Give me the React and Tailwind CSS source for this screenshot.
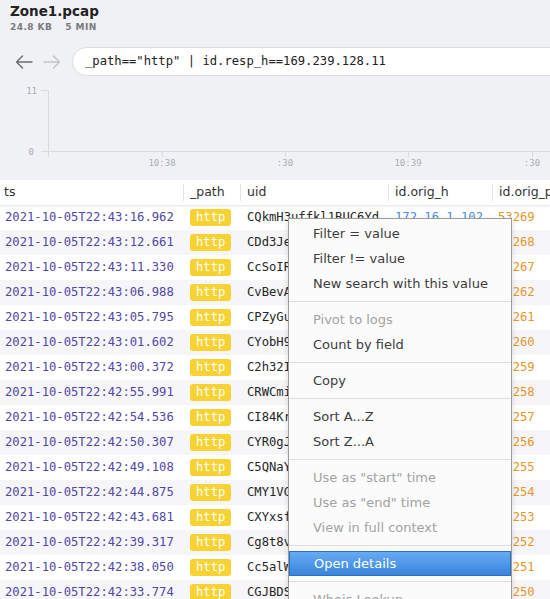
import { useState } from 'react'

const rows = [
  ['2021-10-05T22:43:16.962', 'CQkmH3uffkl1BUC6Yd', '172.16.1.102', '53269'],
  ['2021-10-05T22:43:12.661', 'CDd3Je4kR9mTq2Lx7', '172.16.1.102', '53268'],
  ['2021-10-05T22:43:11.330', 'CcSoIR2bWq8nYv1Hd', '172.16.1.102', '53267'],
  ['2021-10-05T22:43:06.988', 'CvBevA3sKp0dXr6Mz', '172.16.1.102', '53262'],
  ['2021-10-05T22:43:05.795', 'CPZyGu9LhW4eTb2Qn', '172.16.1.102', '53261'],
  ['2021-10-05T22:43:01.602', 'CYobH91mFz7cVs3Ka', '172.16.1.102', '53260'],
  ['2021-10-05T22:43:00.372', 'C2h32I8qNw5jRx0Ep', '172.16.1.102', '53259'],
  ['2021-10-05T22:42:55.991', 'CRWCmi6tGy2kLd9Uo', '172.16.1.102', '53258'],
  ['2021-10-05T22:42:54.536', 'CI84Kr0vBn3pHs7Wc', '172.16.1.102', '53257'],
  ['2021-10-05T22:42:50.307', 'CYR0gJ5xMa1fQe8Tz', '172.16.1.102', '53256'],
  ['2021-10-05T22:42:49.108', 'C5QNaY7dPk4sZu2Jb', '172.16.1.102', '53255'],
  ['2021-10-05T22:42:44.875', 'CMY1VG3rEw9hXc6Lm', '172.16.1.102', '53254'],
  ['2021-10-05T22:42:43.681', 'CXYxsf8nTq1gVa5Rd', '172.16.1.102', '53253'],
  ['2021-10-05T22:42:39.317', 'Cg8t8v2yKb6mWs0Fh', '172.16.1.102', '53252'],
  ['2021-10-05T22:42:38.050', 'Cc5alW4uJd9pNe3Yx', '172.16.1.102', '53251'],
  ['2021-10-05T22:42:33.774', 'CGJBDS1oHf7kRt2Cq', '172.16.1.102', '53250'],
]

const menu = [
  { label: 'Filter = value' },
  { label: 'Filter != value' },
  { label: 'New search with this value' },
  { sep: true },
  { label: 'Pivot to logs', disabled: true },
  { label: 'Count by field' },
  { sep: true },
  { label: 'Copy' },
  { sep: true },
  { label: 'Sort A...Z' },
  { label: 'Sort Z...A' },
  { sep: true },
  { label: 'Use as "start" time', disabled: true },
  { label: 'Use as "end" time', disabled: true },
  { label: 'View in full context', disabled: true },
  { sep: true },
  { label: 'Open details', active: true },
  { sep: true },
  { label: 'Whois Lookup', disabled: true },
]

const columns = [
  { name: 'ts', width: 'w-[183px]' },
  { name: '_path', width: 'w-[57px]' },
  { name: 'uid', width: 'w-[148px]' },
  { name: 'id.orig_h', width: 'w-[104px]' },
  { name: 'id.orig_p', width: 'w-[100px]' },
]

const Chart = () => (
  <svg width="550" height="104" className="block">
    <g stroke="#d9dadf" strokeWidth="1" fill="none">
      <line x1="48.5" y1="14" x2="48.5" y2="81" />
      <line x1="41" y1="14.5" x2="48" y2="14.5" />
      <line x1="41" y1="75.5" x2="550" y2="75.5" />
      <line x1="162.5" y1="75" x2="162.5" y2="81" />
      <line x1="285.5" y1="75" x2="285.5" y2="81" />
      <line x1="408.5" y1="75" x2="408.5" y2="81" />
      <line x1="532.5" y1="75" x2="532.5" y2="81" />
    </g>
    <g fill="#adadb3" fontFamily="'DejaVu Sans Mono', monospace" fontSize="9">
      <text x="37" y="17.5" textAnchor="end">11</text>
      <text x="34" y="78.5" textAnchor="end">0</text>
      <text x="162" y="90" textAnchor="middle">10:38</text>
      <text x="285" y="90" textAnchor="middle">:30</text>
      <text x="408" y="90" textAnchor="middle">10:39</text>
      <text x="532" y="90" textAnchor="middle">:30</text>
    </g>
  </svg>
)

const ContextMenu = () => (
  <div className="absolute left-[288px] top-[218px] w-[224px] h-[400px] bg-[#fbfbfb] border border-[#9c9c9c] pt-[2px] shadow-[0_2px_6px_rgba(0,0,0,0.15)] font-['DejaVu_Sans',sans-serif] text-[13px]">
    {menu.map((item, index) => {
      if (item.sep) {
        return <div key={index} className="h-[11px] flex items-center"><div className="w-full h-px bg-[#dedede]" /></div>
      }
      return (
        <div
          key={index}
          className={`h-[25px] flex items-center pl-[24px] ${
            item.active
              ? 'bg-gradient-to-b from-[#65aaf3] to-[#3a85dc] border border-[#2e6fc3] text-white'
              : item.disabled
                ? 'text-[#a2a2a2]'
                : 'text-[#3c3c3c]'
          }`}
        >
          {item.label}
        </div>
      )
    })}
  </div>
)

const App = () => {
  const [query] = useState('_path=="http" | id.resp_h==169.239.128.11')

  return (
    <div className="relative w-[550px] h-[599px] overflow-hidden bg-[#f0f1f5] font-['DejaVu_Sans',sans-serif]">
      <div className="px-[10px] pt-[3px]">
        <h1 className="text-[13.5px] leading-[16px] font-bold text-[#222]">Zone1.pcap</h1>
        <p className="mt-[2px] text-[9px] leading-[12px] font-bold tracking-[0.05em] text-[#7a7a7f] flex gap-[13px]">
          <span>24.8 KB</span>
          <span>5 MIN</span>
        </p>
      </div>

      <div className="flex items-center mt-[14px] h-[29px]">
        <div className="flex items-center gap-[10px] pl-[15px] pr-[11px]">
          <svg width="18" height="14" viewBox="0 0 18 14" fill="none" stroke="#6b6b70" strokeWidth="1.4" strokeLinecap="round" strokeLinejoin="round">
            <path d="M17 7H1.5M7.5 1L1.5 7l6 6" />
          </svg>
          <svg width="18" height="14" viewBox="0 0 18 14" fill="none" stroke="#c2c2c7" strokeWidth="1.4" strokeLinecap="round" strokeLinejoin="round">
            <path d="M1 7h15.5M10.5 1l6 6-6 6" />
          </svg>
        </div>
        <div className="flex-1 -mr-[30px] h-[29px] bg-white border border-[#dcdce0] rounded-full flex items-center pl-[12px] font-['DejaVu_Sans_Mono',monospace] text-[12.2px] text-[#222]">
          {query}
        </div>
      </div>

      <Chart />

      <div className="bg-white">
        <div className="flex h-[25px] items-center text-[12.5px] text-[#333] shadow-[0_1px_2px_rgba(0,0,0,0.12)] relative">
          {columns.map((column, index) => (
            <div
              key={index}
              className={`${column.width} shrink-0 h-[17px] flex items-center whitespace-nowrap ${index ? 'border-l border-[#e2e2e6] pl-[6px]' : 'pl-[4px]'}`}
            >
              {column.name}
            </div>
          ))}
        </div>
        {rows.map((row, index) => (
          <div
            key={index}
            className={`flex h-[25px] items-center font-['DejaVu_Sans_Mono',monospace] text-[12.2px] ${index % 2 ? 'bg-[#f6f6f8]' : 'bg-white'}`}
          >
            <div className="w-[183px] shrink-0 pl-[5px] text-[#5246a6]">{row[0]}</div>
            <div className="w-[57px] shrink-0 pl-[7px]">
              <span className="inline-flex items-center h-[17px] px-[6px] rounded-[3px] bg-[#f7d232] text-white">http</span>
            </div>
            <div className="w-[148px] shrink-0 pl-[7px] text-[#262626] whitespace-nowrap overflow-hidden">{row[1]}</div>
            <div className="w-[104px] shrink-0 pl-[7px] text-[#4a8fe0]">{row[2]}</div>
            <div className="w-[100px] shrink-0 pl-[6px] text-[#e8952a]">{row[3]}</div>
          </div>
        ))}
      </div>

      <ContextMenu />
    </div>
  )
}

export default App
